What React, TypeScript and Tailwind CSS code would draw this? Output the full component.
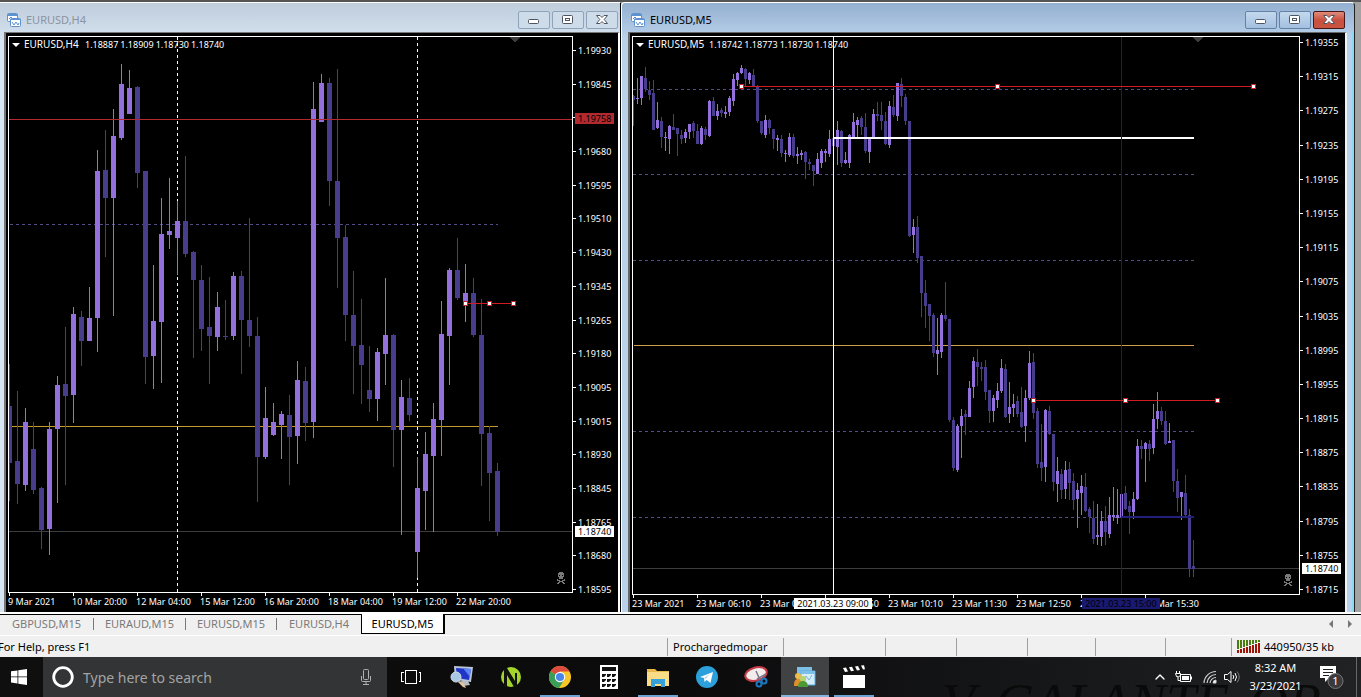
import type { ReactNode } from "react"
import { ChevronUp } from "lucide-react"

// high, low, body top, body bottom, rising
type Candle = [number, number, number, number, 0 | 1]

const h4Candles: Candle[] = [
  [364, 501, 406, 463, 0], [391, 504, 461, 484, 0], [408, 491, 422, 485, 1], [422, 494, 449, 490, 0],
  [487, 549, 488, 530, 0], [422, 555, 429, 529, 1], [376, 503, 385, 429, 1], [327, 485, 384, 396, 0],
  [307, 423, 314, 395, 1], [311, 366, 317, 341, 0], [287, 341, 318, 341, 1], [150, 352, 171, 318, 1],
  [130, 257, 170, 198, 0], [109, 316, 136, 198, 1], [64, 140, 84, 138, 1], [70, 114, 88, 114, 1],
  [86, 188, 87, 173, 0], [171, 384, 171, 357, 0], [265, 389, 321, 356, 1], [198, 383, 234, 322, 1],
  [178, 249, 231, 235, 1], [201, 275, 221, 238, 1], [156, 257, 221, 254, 0], [251, 358, 252, 280, 0],
  [265, 351, 280, 329, 0], [277, 384, 327, 336, 0], [292, 351, 307, 337, 1], [300, 340, 336, 337, 0],
  [272, 340, 276, 336, 1], [271, 374, 276, 320, 0], [218, 347, 320, 336, 0], [317, 502, 336, 457, 0],
  [387, 459, 418, 457, 1], [403, 436, 422, 435, 1], [411, 459, 414, 425, 1], [395, 485, 415, 437, 0],
  [361, 464, 380, 436, 1], [367, 441, 381, 423, 0], [82, 438, 109, 422, 1], [74, 122, 83, 122, 1],
  [78, 206, 83, 181, 0], [69, 288, 181, 238, 0], [225, 341, 237, 315, 0], [271, 394, 315, 346, 0],
  [299, 404, 345, 365, 0], [346, 412, 390, 399, 0], [348, 421, 352, 399, 1], [278, 385, 335, 354, 1],
  [334, 467, 335, 430, 0], [380, 535, 397, 430, 1], [378, 421, 398, 415, 0], [457, 578, 488, 552, 1],
  [432, 530, 454, 491, 1], [403, 532, 419, 456, 1], [301, 456, 334, 420, 1], [268, 385, 270, 336, 1],
  [238, 300, 270, 298, 0], [264, 322, 293, 306, 1], [278, 337, 293, 335, 0], [299, 486, 335, 434, 0],
  [426, 521, 433, 473, 0], [463, 536, 471, 532, 0],
]

const m5Candles: Candle[] = [
  [95, 126, 96, 100, 0], [78, 104, 98, 99, 1], [76, 105, 76, 98, 1], [67, 92, 78, 89, 0], [81, 100, 90, 95, 0],
  [80, 130, 93, 130, 0], [102, 129, 120, 128, 1], [117, 148, 121, 137, 0], [132, 151, 137, 138, 1], [125, 154, 126, 139, 1],
  [114, 130, 127, 130, 0], [128, 156, 128, 134, 0], [130, 144, 135, 139, 0], [129, 143, 132, 138, 1], [124, 139, 124, 132, 1],
  [121, 138, 123, 131, 0], [124, 144, 131, 144, 0], [126, 145, 128, 144, 1], [127, 140, 129, 135, 0], [100, 137, 101, 136, 1],
  [97, 116, 101, 116, 0], [104, 120, 111, 116, 1], [108, 117, 110, 113, 0], [106, 118, 112, 114, 1], [96, 116, 98, 112, 1],
  [74, 106, 79, 101, 1], [72, 86, 73, 80, 1], [65, 74, 68, 73, 1], [68, 86, 69, 79, 0], [72, 84, 73, 80, 1],
  [69, 87, 75, 86, 0], [85, 123, 86, 121, 0], [121, 135, 121, 133, 0], [115, 138, 120, 135, 1], [119, 134, 120, 128, 0],
  [129, 149, 129, 139, 0], [135, 151, 138, 140, 1], [135, 157, 139, 153, 0], [150, 162, 153, 154, 1], [133, 157, 137, 155, 1],
  [134, 158, 137, 156, 0], [147, 164, 154, 156, 1], [150, 160, 153, 155, 1], [151, 179, 152, 162, 0], [159, 170, 162, 164, 0],
  [165, 186, 165, 171, 0], [153, 174, 159, 174, 1], [149, 168, 151, 163, 1], [149, 162, 151, 153, 1], [130, 157, 139, 154, 1],
  [138, 147, 138, 146, 0], [121, 165, 130, 147, 1], [130, 167, 131, 163, 0], [152, 164, 160, 163, 1], [134, 168, 135, 163, 1],
  [113, 138, 122, 138, 1], [117, 137, 120, 125, 1], [116, 135, 118, 127, 0], [113, 153, 127, 151, 0], [137, 163, 139, 152, 1],
  [109, 139, 114, 137, 1], [102, 121, 114, 116, 0], [102, 130, 115, 121, 0], [112, 145, 121, 144, 0], [101, 148, 106, 145, 1],
  [95, 117, 107, 115, 0], [83, 121, 83, 116, 1], [78, 107, 84, 96, 0], [94, 125, 97, 121, 0], [121, 237, 121, 236, 0],
  [219, 253, 227, 235, 1], [216, 263, 227, 258, 0], [256, 317, 256, 293, 0], [280, 328, 293, 306, 0], [304, 341, 304, 316, 0],
  [313, 357, 315, 353, 0], [318, 375, 350, 354, 1], [313, 358, 315, 352, 1], [282, 321, 315, 319, 0], [319, 422, 319, 420, 0],
  [417, 471, 420, 468, 0], [424, 472, 426, 470, 1], [409, 458, 416, 426, 1], [410, 435, 414, 417, 0], [381, 417, 388, 417, 1],
  [357, 398, 361, 387, 1], [349, 386, 362, 367, 0], [362, 381, 367, 369, 0], [360, 400, 367, 392, 0], [390, 423, 390, 411, 0],
  [395, 422, 398, 411, 1], [383, 408, 391, 400, 1], [359, 393, 368, 391, 1], [364, 418, 369, 417, 0], [382, 423, 407, 414, 1],
  [394, 417, 404, 408, 1], [396, 417, 401, 414, 0], [387, 428, 412, 427, 0], [390, 442, 398, 426, 1], [351, 400, 363, 398, 1],
  [353, 419, 362, 413, 0], [408, 468, 411, 464, 0], [424, 481, 462, 468, 0], [409, 482, 410, 467, 1], [406, 435, 411, 434, 0],
  [434, 491, 434, 482, 0], [457, 502, 471, 484, 1], [469, 499, 474, 490, 0], [461, 499, 470, 489, 1], [462, 500, 469, 483, 0],
  [473, 510, 481, 500, 0], [483, 528, 490, 499, 1], [475, 515, 486, 493, 1], [473, 512, 487, 511, 0], [507, 533, 509, 517, 0],
  [501, 544, 518, 539, 0], [504, 545, 535, 537, 1], [511, 546, 521, 537, 1], [506, 545, 521, 532, 0], [497, 538, 515, 534, 1],
  [487, 521, 515, 517, 1], [489, 524, 515, 518, 1], [494, 517, 494, 517, 1], [486, 510, 493, 509, 0], [501, 534, 506, 512, 0],
  [492, 519, 499, 512, 1], [439, 500, 446, 499, 1], [440, 459, 446, 449, 0], [442, 482, 443, 449, 1], [440, 461, 444, 449, 0],
  [404, 454, 419, 448, 1], [392, 429, 411, 419, 1], [407, 425, 411, 421, 0], [411, 445, 421, 444, 0], [423, 443, 441, 443, 1],
  [440, 492, 440, 481, 0], [469, 512, 481, 498, 0], [492, 520, 492, 497, 1], [475, 518, 493, 515, 0], [509, 577, 515, 569, 0],
  [540, 577, 566, 569, 0],
]

const h4Prices = [
  "1.19930", "1.19845", "", "1.19680", "1.19595", "1.19510", "1.19430", "1.19345", "1.19265",
  "1.19180", "1.19095", "1.19015", "1.18930", "1.18845", "1.18765", "1.18680", "1.18595",
]
const m5Prices = [
  "1.19355", "1.19315", "1.19275", "1.19235", "1.19195", "1.19155", "1.19115", "1.19075", "1.19035",
  "1.18995", "1.18955", "1.18915", "1.18875", "1.18835", "1.18795", "1.18755", "1.18715",
]
const h4Times = [
  "9 Mar 2021", "10 Mar 20:00", "12 Mar 04:00", "15 Mar 12:00",
  "16 Mar 20:00", "18 Mar 04:00", "19 Mar 12:00", "22 Mar 20:00",
]
const m5Times = [
  "23 Mar 2021", "23 Mar 06:10", "23 Mar 07:30", "23 Mar 08:50", "23 Mar 10:10",
  "23 Mar 11:30", "23 Mar 12:50", "23 Mar 14:10", "23 Mar 15:30",
]

const UP = "#9370db"
const DOWN = "#483d8b"

function Candles({ data, start, step, body }: { data: Candle[]; start: number; step: number; body: number }) {
  return (
    <g>
      {data.map(([high, low, top, bottom, up], i) => {
        const x = start + i * step
        const fill = up ? UP : DOWN
        return (
          <g key={i} fill={fill}>
            <rect x={x} y={high} width={1} height={low - high} />
            <rect x={x - (body - 1) / 2} y={top} width={body} height={Math.max(bottom - top, 1)} />
          </g>
        )
      })}
    </g>
  )
}

function TrendLine({ y, points }: { y: number; points: number[] }) {
  return (
    <g>
      <rect x={points[0]} y={y} width={points[2] - points[0]} height={1} fill="#d01c22" />
      {points.map((x) => (
        <g key={x}>
          <rect x={x - 2} y={y - 2} width={5} height={5} fill="#d01c22" />
          <rect x={x - 1} y={y - 1} width={3} height={3} fill="#fff" />
        </g>
      ))}
    </g>
  )
}

function Dashed({ y, from, to }: { y: number; from: number; to: number }) {
  return <path d={`M${from} ${y + 0.5}H${to}`} stroke="#514c86" strokeDasharray="3 3" />
}

function SkullMark({ x, y }: { x: number; y: number }) {
  return (
    <g transform={`translate(${x} ${y})`} fill="#7a7a7a">
      <path d="M2 1h1V0h4v1h1v4H7v2H3V5H2z" />
      <path d="M3 3h1v1H3zM6 3h1v1H6z" fill="#000" />
      <path d="M1 7h1v1h2v1h2V8h2V7h1v2H7v1h1v1h1v1H7v-1H6v-1H4v1H3v1H1v-1h1v-1h1V9H1z" />
    </g>
  )
}

function H4Plot() {
  return (
    <svg viewBox="9 37 563 555" preserveAspectRatio="none" shapeRendering="crispEdges" fill="none" className="min-h-0 w-full flex-1 basis-0">
      <rect x={9} y={531} width={563} height={1} fill="#3c3c3c" />
      <Dashed y={224} from={10} to={498} />
      <rect x={12} y={426} width={486} height={1} fill="#c79a2e" />
      <path d="M177.5 37V592M417.5 37V592" stroke="#fff" strokeDasharray="3 3" />
      <Candles data={h4Candles} start={9} step={8} body={5} />
      <rect x={9} y={119} width={563} height={1} fill="#b22a30" />
      <TrendLine y={303} points={[465, 489, 513]} />
      <path d="M509 37h11l-5 5z" fill="#3d3d3d" />
      <SkullMark x={556} y={572} />
    </svg>
  )
}

function M5Plot() {
  return (
    <svg viewBox="633 37 666 557" preserveAspectRatio="none" shapeRendering="crispEdges" fill="none" className="min-h-0 w-full flex-1 basis-0">
      <rect x={633} y={568} width={666} height={1} fill="#3c3c3c" />
      {[89, 174, 260, 431, 517].map((y) => (
        <Dashed key={y} y={y} from={633} to={1195} />
      ))}
      <rect x={634} y={345} width={560} height={1} fill="#cf9f4a" />
      <Candles data={m5Candles} start={633} step={4} body={3} />
      <rect x={833} y={37} width={1} height={557} fill="#fff" />
      <rect x={834} y={137} width={360} height={2} fill="#fff" />
      <rect x={1121} y={37} width={1} height={557} fill="#191970" />
      <rect x={1121} y={516} width={73} height={2} fill="#22207a" />
      <TrendLine y={86} points={[741, 997, 1253]} />
      <TrendLine y={400} points={[1033, 1125, 1217]} />
      <path d="M1192 37h11l-5 5z" fill="#3d3d3d" />
      <SkullMark x={1283} y={574} />
    </svg>
  )
}

function PriceBadge({ top, className, children }: { top: number; className: string; children: ReactNode }) {
  return (
    <div className={`absolute left-[2px] h-[11px] w-[39px] pl-[3px] ${className}`} style={{ top: `${top * 100}%` }}>
      {children}
    </div>
  )
}

type ChartProps = {
  name: string
  quotes: string[]
  plot: ReactNode
  prices: string[]
  times: string[]
  tail: string
  pricePad: string
  timeHeight: string
  priceBadges: ReactNode
  timeBadges?: ReactNode
}

function Chart({ name, quotes, plot, prices, times, tail, pricePad, timeHeight, priceBadges, timeBadges }: ChartProps) {
  return (
    <div className="flex min-h-0 flex-1 bg-black pt-[3px] pl-[2px] text-[9px] leading-[11px] text-white">
      <div className="flex min-w-0 flex-1 flex-col">
        <div className="relative flex min-h-0 flex-1 flex-col border border-white">
          {plot}
          <div className="absolute top-[2px] left-[3px] flex items-center whitespace-nowrap">
            <svg viewBox="0 0 8 4" className="h-1 w-2 fill-white">
              <path d="M0 0h8L4 4z" />
            </svg>
            <span className="ml-1 w-[61px] text-[10px]">{name}</span>
            <span className="flex gap-[2px]">
              {quotes.map((q) => (
                <span key={q}>{q}</span>
              ))}
            </span>
          </div>
        </div>
        <div className={`relative flex whitespace-nowrap ${timeHeight}`}>
          {times.map((t) => (
            <div key={t} className="w-0 grow-[64]">
              <div className="ml-px h-[3px] w-px bg-white" />
              {t}
            </div>
          ))}
          <div className={tail} />
          {timeBadges}
        </div>
      </div>
      <div className={`relative flex w-[45px] flex-col justify-between ${pricePad}`}>
        {prices.map((p, i) => (
          <div key={i} className="flex h-[11px] items-center gap-[2px]">
            <div className="h-px w-[3px] bg-white" />
            {p}
          </div>
        ))}
        {priceBadges}
      </div>
    </div>
  )
}

function ChartIcon() {
  return (
    <svg viewBox="0 0 14 14" className="h-[14px] w-[14px]" fill="#fff" stroke="#5b92cf">
      <rect x="0.5" y="0.5" width="10" height="8" rx="1" />
      <path d="M0.5 2h10" strokeWidth="2" />
      <path d="M2 6l2-2 2 2" fill="none" />
      <rect x="3.5" y="5.5" width="10" height="8" rx="1" />
      <path d="M3.5 6.5h10" />
      <path d="M5 9l2 3 2-3 2 3 1-2" fill="none" />
    </svg>
  )
}

function WindowButtons({ active }: { active?: boolean }) {
  const base = active
    ? "flex h-[18px] w-8 items-center justify-center rounded-[2px] border border-[#6482a8] bg-linear-to-b from-[#c4d8ed] to-[#a3c0e0]"
    : "flex h-[18px] w-8 items-center justify-center rounded-[2px] border border-[#8fa3bb] bg-[#cedbe8]"
  const close = active
    ? "flex h-[18px] w-8 items-center justify-center rounded-[2px] border border-[#47161a] bg-linear-to-b from-[#e08c7c] via-[#c9503f] to-[#c8553f]"
    : base
  return (
    <div className="flex gap-[2px]">
      <button aria-label="Minimize" className={base}>
        <svg viewBox="0 0 12 12" className="h-3 w-3" fill="#fff" stroke="#4d5562">
          <rect x="0.5" y="5.5" width="10" height="4" rx="1" />
        </svg>
      </button>
      <button aria-label="Maximize" className={base}>
        <svg viewBox="0 0 12 12" className="h-3 w-3" fill="#fff" stroke="#4d5562">
          <rect x="0.5" y="1.5" width="10" height="8" rx="1" />
          <rect x="3.5" y="4.5" width="4" height="2" />
        </svg>
      </button>
      <button aria-label="Close" className={close}>
        <svg viewBox="0 0 12 12" className="h-3 w-3" fill="#fff" stroke="#4d5562">
          <path d="M0.500 1.500h3.500l2 2 2-2h3.500L8.200 5.500l3.300 4H8L6 7.500l-2 2H0.500l3.300-4z" />
        </svg>
      </button>
    </div>
  )
}

function H4Window() {
  return (
    <section className="flex min-w-0 flex-1 flex-col border-t border-r border-t-white border-r-black bg-linear-to-b from-[#bfcddc] to-[#d7e4f1] to-[40px]">
      <header className="flex h-[29px] items-center justify-between pt-[5px] pr-[2px] pl-[7px] text-[11px] text-[#8b939e]">
        <div className="flex items-center gap-[5px]">
          <ChartIcon />
          <h2>EURUSD,H4</h2>
        </div>
        <WindowButtons />
      </header>
      <div className="ml-1 flex min-h-0 flex-1 border-t border-r-2 border-l-2 border-t-[#777] border-r-white border-l-[#777]">
        <Chart
          name="EURUSD,H4"
          quotes={["1.18887", "1.18909", "1.18730", "1.18740"]}
          plot={<H4Plot />}
          prices={h4Prices}
          times={h4Times}
          tail="w-0 grow-[53]"
          pricePad="pt-[9px] pb-[17px]"
          timeHeight="h-[19px]"
          priceBadges={
            <>
              <PriceBadge top={77 / 576} className="bg-[#b22a2e] text-black">1.19758</PriceBadge>
              <PriceBadge top={490 / 576} className="bg-white text-black">1.18740</PriceBadge>
            </>
          }
        />
      </div>
    </section>
  )
}

function M5Window() {
  return (
    <section className="flex min-w-0 flex-1 bg-[#a3a3a3] pr-[6px]">
      <div className="flex min-w-0 flex-1 flex-col rounded-t-[4px] border-t border-r border-l border-t-white border-r-[#222] border-l-white bg-linear-to-b from-[#93b0d0] to-[#bad1ea] to-[36px]">
        <header className="flex h-[29px] items-center justify-between pt-[5px] pr-[9px] pl-[9px] text-[11px] text-black">
          <div className="flex items-center gap-[5px]">
            <ChartIcon />
            <h2>EURUSD,M5</h2>
          </div>
          <WindowButtons active />
        </header>
        <div className="flex min-h-0 flex-1 border-r-2 border-[#8fd8f4]">
          <div className="mr-[5px] ml-[6px] flex min-w-0 flex-1 border-t border-r-2 border-l-2 border-t-[#666] border-r-[#eef4fb] border-l-[#666]">
            <Chart
              name="EURUSD,M5"
              quotes={["1.18742", "1.18773", "1.18730", "1.18740"]}
              plot={<M5Plot />}
              prices={m5Prices}
              times={m5Times}
              tail="w-0 grow-[92]"
              pricePad="pt-[1px] pb-[17px]"
              timeHeight="h-[17px]"
              priceBadges={<PriceBadge top={527 / 576} className="bg-white text-black">1.18740</PriceBadge>}
              timeBadges={
                <>
                  <div className="absolute top-[3px] h-[11px] w-[78px] bg-white text-center text-black" style={{ left: `${(162 / 668) * 100}%` }}>
                    2021.03.23 09:00
                  </div>
                  <div className="absolute top-[3px] h-[11px] w-[78px] bg-[#191970] text-center text-black" style={{ left: `${(450 / 668) * 100}%` }}>
                    2021.03.23 15:00
                  </div>
                </>
              }
            />
          </div>
        </div>
      </div>
    </section>
  )
}

function ChartTabs() {
  return (
    <nav className="flex h-[21px] items-start border-t border-black bg-[#f0f0f0] text-[11px] leading-[18px] text-[#7a7a7a]">
      <div className="flex items-center">
        <button className="w-[93px]">GBPUSD,M15</button>
        <span className="h-3 w-px bg-[#7a7a7a]" />
        <button className="w-[91px]">EURAUD,M15</button>
        <span className="h-3 w-px bg-[#7a7a7a]" />
        <button className="w-[90px]">EURUSD,M15</button>
        <span className="h-3 w-px bg-[#7a7a7a]" />
        <button className="w-[84px]">EURUSD,H4</button>
      </div>
      <button className="-mt-px h-5 w-[84px] border border-t-0 border-r-2 border-black bg-white text-black">EURUSD,M5</button>
      <div className="flex flex-1 justify-end gap-[15px] pt-[5px] pr-[9px]">
        <button aria-label="Scroll tabs left">
          <svg viewBox="0 0 4 8" className="block h-2 w-1 fill-[#777]"><path d="M4 0v8L0 4z" /></svg>
        </button>
        <button aria-label="Scroll tabs right">
          <svg viewBox="0 0 4 8" className="block h-2 w-1 fill-[#777]"><path d="M0 0v8l4-4z" /></svg>
        </button>
      </div>
    </nav>
  )
}

function StatusBar() {
  return (
    <footer className="flex h-[22px] items-center border-t border-white bg-[#f0f0f0] text-[11px] leading-[18px] whitespace-nowrap text-black">
      <div className="-ml-[2px] min-w-0 flex-1">For Help, press F1</div>
      <div className="h-[18px] w-[116px] border-l border-[#a0a0a0] pl-[5px]">Prochargedmopar</div>
      <div className="h-[18px] w-[102px] border-l border-[#a0a0a0]" />
      <div className="h-[18px] w-[71px] border-l border-[#a0a0a0]" />
      <div className="h-[18px] w-[71px] border-l border-[#a0a0a0]" />
      <div className="h-[18px] w-[68px] border-l border-[#a0a0a0]" />
      <div className="h-[18px] w-[70px] border-l border-[#a0a0a0]" />
      <div className="h-[18px] w-[66px] border-l border-[#a0a0a0]" />
      <div className="flex h-[18px] w-[130px] items-center gap-[3px] border-l border-[#a0a0a0] pl-[5px]">
        <svg viewBox="0 0 24 14" shapeRendering="crispEdges" className="h-[14px] w-6">
          {Array.from({ length: 8 }, (_, i) => (
            <g key={i}>
              <rect x={i * 3} y={0} width={2} height={9 - i} fill="#4a7d10" />
              <rect x={i * 3} y={10 - i} width={2} height={3 + i} fill="#a01408" />
            </g>
          ))}
        </svg>
        440950/35 kb
      </div>
    </footer>
  )
}

function RemoteIcon() {
  return (
    <svg viewBox="0 0 24 24" className="h-6 w-6">
      <path d="M4 1l19 1-2 15-16-2z" fill="#b9c4d6" />
      <path d="M6 3l15 1-2 11-12-2z" fill="#1f36c8" />
      <path d="M13 3l8 1-1 8z" fill="#5f86ee" />
      <path d="M11 16h7l2 4-7 1z" fill="#b9bdc2" />
      <circle cx="6" cy="12" r="5" fill="#a9c8e4" stroke="#d4dde6" />
      <path d="M8 17l5 5 3 1-2-4-4-3z" fill="#e4c9a4" />
    </svg>
  )
}

function NinjaIcon() {
  return (
    <svg viewBox="0 0 24 24" className="h-6 w-6">
      <circle cx="12" cy="12" r="10" fill="#a4d52a" />
      <path d="M5 3h3l8 13V8h2v14h-3L8 10v12H5z" fill="#10120c" />
    </svg>
  )
}

function ChromeLogo() {
  return (
    <svg viewBox="0 0 24 24" className="h-6 w-6">
      <circle cx="12" cy="12" r="11" fill="#f6c726" />
      <path d="M12 12L2.500 6.500A11 11 0 0 1 21.500 6.500H12z" fill="#dd4b3e" />
      <path d="M2.500 6.500A11 11 0 0 0 11 23l5.500-8.500L12 12z" fill="#3a9d57" />
      <circle cx="12" cy="12" r="5.200" fill="#fff" />
      <circle cx="12" cy="12" r="4.100" fill="#4a86e8" />
    </svg>
  )
}

function CalculatorIcon() {
  return (
    <svg viewBox="0 0 18 24" className="h-6 w-[18px]">
      <path d="M0 0h18v24H0z" fill="#fff" />
      <path d="M2 2h14v4H2z" fill="#111" />
      {[9, 14, 19].map((y) => [2, 7, 12].map((x) => <path key={`${x}-${y}`} d={`M${x} ${y}h4v1l-2 2h-2z`} fill="#111" />))}
    </svg>
  )
}

function FolderIcon() {
  return (
    <svg viewBox="0 0 24 24" className="h-6 w-6">
      <path d="M1 4h8l2 2h12v15H1z" fill="#e9b94a" />
      <path d="M1 7h22v14H1z" fill="#fbdc86" />
      <path d="M5 14h14v8h-4v-3H9v3H5z" fill="#35a0da" />
    </svg>
  )
}

function TelegramIcon() {
  return (
    <svg viewBox="0 0 24 24" className="h-6 w-6">
      <circle cx="12" cy="12" r="11" fill="#2ba0da" />
      <path d="M5 12l13-5-2.500 11-4-3-2 2-.500-4z" fill="#fff" />
      <path d="M9 13l6-4-4.500 5z" fill="#b5d6ea" />
    </svg>
  )
}

function SnipIcon() {
  return (
    <svg viewBox="0 0 24 24" className="h-6 w-6" fill="none">
      <ellipse cx="12" cy="9" rx="11" ry="6.500" transform="rotate(-15 12 9)" fill="#f2ecec" stroke="#c53a45" strokeWidth="2" />
      <path d="M12 6l4 9M22 9l-9 5" stroke="#778" strokeWidth="1.500" />
      <circle cx="15" cy="19" r="2.500" stroke="#1c78c0" strokeWidth="2" />
      <circle cx="20" cy="16" r="2.500" stroke="#1c78c0" strokeWidth="2" />
    </svg>
  )
}

function TraderIcon() {
  return (
    <svg viewBox="0 0 24 24" className="h-6 w-6">
      <path d="M4 2h15v13H4z" fill="#7cc0e8" />
      <path d="M8 6h14v14H8z" fill="#d5edf9" stroke="#5caadd" />
      <path d="M8 6h14v3H8z" fill="#7cc0e8" />
      <path d="M11 15l2-4 3 4 3-5" stroke="#7cb6da" fill="none" />
      <circle cx="5" cy="11" r="3" fill="#eebc48" />
      <path d="M1 21c0-5 1-7 4-7s4 2 4 7z" fill="#df8f28" />
      <circle cx="10" cy="14" r="3" fill="#b7d36c" />
      <path d="M5 22c0-4 2-6 5-6s5 2 5 6z" fill="#4c9a35" />
    </svg>
  )
}

function ClapperIcon() {
  return (
    <svg viewBox="0 0 24 24" className="h-6 w-6" fill="#fff">
      <path d="M1 10h22v13H1z" />
      <path d="M1 3l3-.400 2 4-3 .400zM7 2.200l3-.400 2 4-3 .400zM13 1.400l3-.400 2 4-3 .400zM19 .600l3-.400 1 4-2 .400z" />
    </svg>
  )
}

const apps = [
  { name: "Remote Desktop", icon: <RemoteIcon />, open: false },
  { name: "NinjaTrader", icon: <NinjaIcon />, open: false },
  { name: "Chrome", icon: <ChromeLogo />, open: true },
  { name: "Calculator", icon: <CalculatorIcon />, open: false },
  { name: "File Explorer", icon: <FolderIcon />, open: true },
  { name: "Telegram", icon: <TelegramIcon />, open: false },
  { name: "Snipping Tool", icon: <SnipIcon />, open: false },
  { name: "MetaTrader", icon: <TraderIcon />, open: true, active: true },
  { name: "Movies", icon: <ClapperIcon />, open: true },
]

function AppButton({ name, icon, open, active }: { name: string; icon: ReactNode; open: boolean; active?: boolean }) {
  return (
    <button
      aria-label={name}
      className={active ? "flex h-10 w-12 flex-col items-center bg-[#414244]" : "flex h-10 w-12 flex-col items-center"}
    >
      <span className="flex flex-1 items-center">{icon}</span>
      {open && <span className={active ? "-mt-[2px] h-[2px] w-12 bg-[#86b4de]" : "-mt-[2px] h-[2px] w-10 bg-[#6fa3d3]"} />}
    </button>
  )
}

function Taskbar() {
  return (
    <div className="relative flex h-10 shrink-0 items-center overflow-hidden bg-linear-to-r from-[#0f0f10] via-[#0b0b0c] to-[#212224] text-white">
      {/* wallpaper lettering that shows through the bar */}
      <div aria-hidden="true" className="absolute top-[16px] right-[40px] flex gap-5 font-['Liberation_Serif',serif] text-[54px] leading-[60px] text-[#0a0a0a] italic select-none">
        <span>V</span>
        <span>GALANTE</span>
        <span>OR</span>
      </div>
      <button aria-label="Start" className="flex h-10 w-[43px] items-center pl-[11px]">
        <svg viewBox="0 0 16 16" className="h-4 w-4 fill-white">
          <path d="M0 2.300l6.500-.900v6.100H0zM7.300 1.300L16 0v7.500H7.300zM0 8.300h6.500v6.200L0 13.600zM7.300 8.300H16V16l-8.700-1.300z" />
        </svg>
      </button>
      <label className="flex h-10 w-[344px] items-center bg-[#333435] pl-[9px]">
        <svg viewBox="0 0 22 22" className="h-[22px] w-[22px]" fill="none" stroke="#fff" strokeWidth="2.800">
          <circle cx="11" cy="11" r="9.300" />
        </svg>
        <input
          aria-label="Search"
          placeholder="Type here to search"
          className="ml-[9px] min-w-0 flex-1 bg-transparent text-[14px] text-white placeholder-[#a4a4a4] outline-none"
        />
        <svg viewBox="0 0 12 18" className="mr-[15px] h-[18px] w-3" fill="none" stroke="#b0b0b0">
          <rect x="3.500" y="1.500" width="5" height="10" rx="1" />
          <path d="M1.500 8v4.500q0 1 1 1h7q1 0 1-1V8M6 13.500V16M3 16.500h6" />
        </svg>
      </label>
      <button aria-label="Task View" className="flex h-10 w-12 items-center justify-center">
        <svg viewBox="0 0 20 14" className="h-[14px] w-5" fill="none" stroke="#fff" shapeRendering="crispEdges">
          <path d="M4.500 0.500h11v13h-11zM2.500 2.500h-2v9h2M17.500 2.500h2v9h-2" />
        </svg>
      </button>
      <div className="ml-[3px] flex gap-px">
        {apps.map((app) => (
          <AppButton key={app.name} {...app} />
        ))}
      </div>
      <div className="relative ml-auto flex h-10 items-center">
        <button aria-label="Show hidden icons">
          <ChevronUp className="block h-4 w-4" strokeWidth={2} />
        </button>
        <svg viewBox="0 0 18 14" className="ml-[7px] h-[14px] w-[18px]" fill="none" stroke="#fff" aria-label="Battery">
          <path d="M5.500 4.500h10v7h-10z" />
          <path d="M7 6h7v4H7zM16 6.500h1v3h-1z" fill="#fff" stroke="none" />
          <path d="M1.500 1v2M4.500 1v2M0.500 3.500h5v2q-2 2-4 1zM3 7v3.500h2" />
        </svg>
        <svg viewBox="0 0 14 14" className="ml-[10px] h-[14px] w-[14px]" fill="none" stroke="#cfcfcf" aria-label="Wi-Fi">
          <path d="M1 13A12 12 0 0 1 13 1.500M4 13a9 9 0 0 1 9-8.500M7 13a6 6 0 0 1 6-5.500" strokeWidth="1.200" />
          <path d="M10 13a3 3 0 0 1 3-3v3z" fill="#fff" />
        </svg>
        <svg viewBox="0 0 16 14" className="ml-[7px] h-[14px] w-4" fill="none" stroke="#fff" aria-label="Volume">
          <path d="M0.500 4.500h3l3.500-3v11l-3.500-3h-3z" />
          <path d="M9 5q1.500 2 0 4M11 3q3 4 0 8" />
          <path d="M13 1.500q4.500 5.500 0 11" stroke="#777" />
        </svg>
        <div className="ml-[6px] flex w-[59px] flex-col text-center text-[11px] leading-[18px]">
          <span>8:32 AM</span>
          <span>3/23/2021</span>
        </div>
        <button aria-label="Notifications" className="relative ml-[15px] h-6 w-6">
          <svg viewBox="0 0 24 24" className="h-6 w-6">
            <path d="M0 1h16v12H9l-4 4v-4H0z" fill="#fff" />
            <path d="M3 4.500h10M3 7.500h10M3 10.500h6" stroke="#222" />
            <circle cx="15.500" cy="16" r="7.500" fill="#3a3a3c" stroke="#77777a" />
          </svg>
          <span className="absolute right-0 bottom-0 w-[17px] text-center text-[11px] leading-4">1</span>
        </button>
        <div className="ml-3 h-10 w-px bg-[#66676a]" />
        <div className="w-1" />
      </div>
    </div>
  )
}

export default function App() {
  return (
    <div className="flex h-screen flex-col overflow-hidden bg-[#555] pt-[2px] font-['Noto_Sans','Open_Sans',sans-serif]">
      <main className="flex min-h-0 flex-1">
        <div className="flex w-0 grow-[621]">
          <H4Window />
        </div>
        <div className="flex w-0 grow-[740]">
          <M5Window />
        </div>
      </main>
      <div className="h-[2px] shrink-0 bg-white" />
      <ChartTabs />
      <StatusBar />
      <Taskbar />
    </div>
  )
}
